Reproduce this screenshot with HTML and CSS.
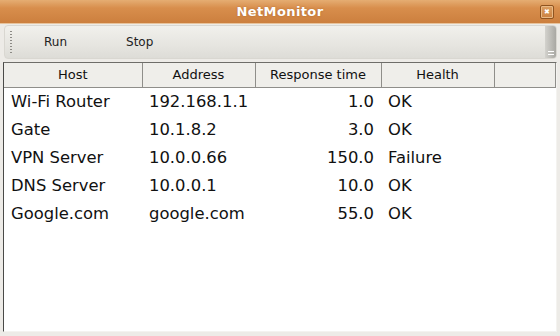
FILE: index.html
```html
<!DOCTYPE html>
<html lang="en">
<head>
    <meta charset="UTF-8">
    <title>NetMonitor</title>
    <link rel="stylesheet" href="styles.css">
</head>
<body>
    <div class="window">
        <div class="titlebar">
            <span class="title">NetMonitor</span>
            <span class="close-btn">&#x2716;</span>
        </div>

        <div class="toolbar">
            <div class="grip"></div>
            <button class="tool-btn run">Run</button>
            <button class="tool-btn">Stop</button>
            <div class="overflow"><span class="overflow-icon"></span></div>
        </div>

        <div class="list-area">
            <table class="hosts">
                <colgroup>
                    <col class="c-host">
                    <col class="c-addr">
                    <col class="c-time">
                    <col class="c-health">
                    <col>
                </colgroup>
                <thead>
                    <tr>
                        <th>Host</th>
                        <th>Address</th>
                        <th>Response time</th>
                        <th>Health</th>
                        <th></th>
                    </tr>
                </thead>
                <tbody>
                    <tr><td>Wi-Fi Router</td><td>192.168.1.1</td><td class="num">1.0</td><td>OK</td><td></td></tr>
                    <tr><td>Gate</td><td>10.1.8.2</td><td class="num">3.0</td><td>OK</td><td></td></tr>
                    <tr><td>VPN Server</td><td>10.0.0.66</td><td class="num">150.0</td><td>Failure</td><td></td></tr>
                    <tr><td>DNS Server</td><td>10.0.0.1</td><td class="num">10.0</td><td>OK</td><td></td></tr>
                    <tr><td>Google.com</td><td>google.com</td><td class="num">55.0</td><td>OK</td><td></td></tr>
                </tbody>
            </table>
        </div>
    </div>
</body>
</html>
```

FILE: styles.css
```css
* {
    margin: 0;
    padding: 0;
    box-sizing: border-box;
    font-family: 'DejaVu Sans', sans-serif;
}

body {
    background-color: #edebe7;
}

.window {
    width: 560px;
    height: 336px;
    display: flex;
    flex-direction: column;
    background: #edebe7;
    overflow: hidden;
}

.titlebar {
    height: 24px;
    flex: none;
    background: linear-gradient(#e5ad72, #d88e4c 35%, #cc7f3e);
    border-bottom: 1px solid #e7c39c;
    display: flex;
    align-items: center;
    justify-content: center;
    position: relative;
}

.title {
    color: #fff;
    font-weight: bold;
    font-size: 13px;
    letter-spacing: 0.4px;
    text-shadow: 0 0 2px rgba(120, 60, 10, 0.4);
}

.close-btn {
    position: absolute;
    right: 6px;
    top: 5px;
    width: 14px;
    height: 14px;
    border: 1px solid #8f5420;
    border-radius: 2px;
    background: linear-gradient(#dca063, #cc8240);
    box-shadow: inset 0 0 0 1px #e9b985;
    color: #fff;
    font-size: 7px;
    line-height: 12px;
    text-align: center;
}

.toolbar {
    height: 34px;
    flex: none;
    margin: 1px 3px 0 4px;
    display: flex;
    align-items: center;
    background: linear-gradient(#f1f0ec, #e6e5e0 60%, #dddcd7);
    border: 1px solid #d9d7d1;
    border-radius: 4px;
    position: relative;
}

.grip {
    width: 2px;
    height: 22px;
    margin-left: 5px;
    background: repeating-linear-gradient(#8d8b86 0 1px, transparent 1px 3px);
}

.tool-btn {
    border: none;
    background: none;
    font-size: 12px;
    color: #222;
    font-family: 'DejaVu Sans', sans-serif;
}

.tool-btn.run {
    margin-left: 32px;
}

.tool-btn + .tool-btn {
    margin-left: 59px;
}

.overflow {
    margin-left: auto;
    width: 11px;
    height: 100%;
    background: linear-gradient(90deg, #d3d2cd, #a9a8a3);
    border-radius: 0 3px 3px 0;
    position: relative;
}

.overflow-icon {
    position: absolute;
    left: 3px;
    bottom: 3px;
    width: 6px;
    height: 4px;
    border-top: 1px solid #fff;
    border-bottom: 1px solid #fff;
}

.list-area {
    flex: 1;
    margin: 3px 3px 4px 3px;
    background: #fff;
    border-left: 1px solid #4a4a48;
    border-top: 1px solid #6e6d69;
    border-right: 1px solid #f4f3f0;
    border-bottom: 1px solid #f4f3f0;
}

.hosts {
    width: 100%;
    border-collapse: collapse;
    table-layout: fixed;
}

.c-host { width: 138px; }
.c-addr { width: 113px; }
.c-time { width: 126px; }
.c-health { width: 113px; }

.hosts th {
    height: 24px;
    font-size: 13px;
    font-weight: normal;
    color: #111;
    background: #efeeea;
    border-right: 1px solid #8f8e8a;
    border-bottom: 1px solid #8f8e8a;
    text-align: center;
}

.hosts td {
    height: 28px;
    font-size: 16.4px;
    color: #111;
    padding-left: 7px;
    white-space: nowrap;
}

.hosts td.num {
    text-align: right;
    padding-right: 7px;
}
```
